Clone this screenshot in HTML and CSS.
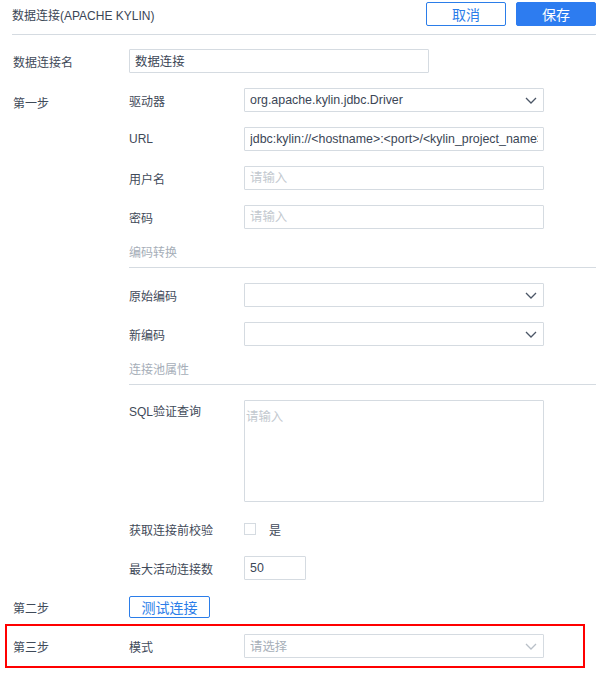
FILE: index.html
```html
<!DOCTYPE html>
<html lang="zh-CN">
<head>
    <meta charset="UTF-8">
    <meta name="viewport" content="width=device-width, initial-scale=1.0">
    <title>数据连接</title>
    <link rel="stylesheet" href="styles.css">
</head>
<body>
    <div class="page">
        <div class="page-header">
            <span class="page-title">数据连接(APACHE KYLIN)</span>
            <div class="header-actions">
                <button class="btn btn-outline">取消</button>
                <button class="btn btn-primary">保存</button>
            </div>
        </div>

        <div class="form-row first">
            <div class="step">数据连接名</div>
            <input class="field field-wide" type="text" value="数据连接">
        </div>

        <!-- step one -->
        <div class="step-group">
            <div class="step">第一步</div>
            <div class="step-body">
                <div class="form-row">
                    <div class="label">驱动器</div>
                    <div class="field select">
                        <span>org.apache.kylin.jdbc.Driver</span>
                        <svg class="chevron" width="12" height="7" viewBox="0 0 12 7"><path d="M1 1l5 5 5-5" fill="none" stroke="#4b5666" stroke-width="1.3"/></svg>
                    </div>
                </div>
                <div class="form-row">
                    <div class="label">URL</div>
                    <input class="field" type="text" value="jdbc:kylin://<hostname>:<port>/<kylin_project_name>">
                </div>
                <div class="form-row">
                    <div class="label">用户名</div>
                    <input class="field" type="text" placeholder="请输入">
                </div>
                <div class="form-row">
                    <div class="label">密码</div>
                    <input class="field" type="text" placeholder="请输入">
                </div>

                <div class="section-title">编码转换</div>
                <div class="form-row">
                    <div class="label">原始编码</div>
                    <div class="field select">
                        <span></span>
                        <svg class="chevron" width="12" height="7" viewBox="0 0 12 7"><path d="M1 1l5 5 5-5" fill="none" stroke="#4b5666" stroke-width="1.3"/></svg>
                    </div>
                </div>
                <div class="form-row">
                    <div class="label">新编码</div>
                    <div class="field select">
                        <span></span>
                        <svg class="chevron" width="12" height="7" viewBox="0 0 12 7"><path d="M1 1l5 5 5-5" fill="none" stroke="#4b5666" stroke-width="1.3"/></svg>
                    </div>
                </div>

                <div class="section-title">连接池属性</div>
                <div class="form-row top">
                    <div class="label">SQL验证查询</div>
                    <textarea class="field area" placeholder="请输入"></textarea>
                </div>
                <div class="form-row">
                    <div class="label">获取连接前校验</div>
                    <label class="check"><span class="box"></span>是</label>
                </div>
                <div class="form-row">
                    <div class="label">最大活动连接数</div>
                    <input class="field field-small" type="text" value="50">
                </div>
            </div>
        </div>

        <div class="form-row step-two">
            <div class="step">第二步</div>
            <button class="btn btn-outline btn-test">测试连接</button>
        </div>

        <div class="form-row step-three">
            <div class="step">第三步</div>
            <div class="label">模式</div>
            <div class="field select muted">
                <span>请选择</span>
                <svg class="chevron" width="12" height="7" viewBox="0 0 12 7"><path d="M1 1l5 5 5-5" fill="none" stroke="#b9c0c8" stroke-width="1.3"/></svg>
            </div>
        </div>
    </div>
</body>
</html>
```

FILE: styles.css
```css
/* Base styles */
body {
    margin: 0;
    font-family: 'Liberation Sans', 'Noto Sans CJK SC', sans-serif;
    font-size: 12px;
    color: #3f4a59;
    background: #fff;
}

.page {
    padding: 0 11px 0 0;
}

.page-header {
    display: flex;
    justify-content: space-between;
    align-items: flex-start;
    height: 34px;
    margin-left: 12px;
    border-bottom: 1px solid #d5dbe1;
}

.page-title {
    line-height: 16px;
    margin-top: 8px;
    font-size: 12px;
    color: #3b4656;
}

.header-actions {
    display: flex;
    gap: 10px;
    margin-top: 2px;
}

.btn {
    font-family: 'Liberation Sans', 'Noto Sans CJK SC', sans-serif;
    font-size: 14px;
    height: 24px;
    width: 80px;
    padding: 0;
    border-radius: 2px;
    cursor: pointer;
}

.btn-outline {
    background: #fff;
    color: #2b7de9;
    border: 1px solid #2b7de9;
}

.btn-primary {
    background: #2d7cf0;
    color: #fff;
    border: 1px solid #2d7cf0;
}

.form-row {
    display: flex;
    align-items: center;
    margin-top: 15px;
}

.form-row.first {
    margin-top: 14px;
}

.form-row.top {
    align-items: flex-start;
}

.step {
    width: 116px;
    padding-left: 13px;
    flex-shrink: 0;
}

.label {
    width: 115px;
    flex-shrink: 0;
}

.form-row.top .label {
    padding-top: 2px;
}

.step-group {
    display: flex;
    align-items: flex-start;
}

.step-group > .step {
    margin-top: 21px;
}

.step-body {
    flex: 1;
}

.field {
    box-sizing: border-box;
    width: 300px;
    height: 24px;
    border: 1px solid #d5dbe1;
    border-radius: 1px;
    padding: 0 5px;
    font-family: 'Liberation Sans', 'Noto Sans CJK SC', sans-serif;
    font-size: 12.4px;
    color: #3b4656;
    background: #fff;
    outline: none;
}

.field::placeholder {
    color: #c3c9cf;
}

.field-small {
    width: 62px;
}

.select {
    display: flex;
    align-items: center;
    justify-content: space-between;
    padding-right: 6px;
}

.select.muted {
    color: #a8b0b9;
}

.area {
    height: 102px;
    padding: 6px 1px;
    resize: none;
}

.section-title {
    margin-top: 15px;
    line-height: 18px;
    padding-bottom: 5px;
    color: #a6aeb8;
    border-bottom: 1px solid #d5dbe1;
}

.check {
    display: flex;
    align-items: center;
    height: 24px;
}

.box {
    width: 12px;
    height: 12px;
    box-sizing: border-box;
    border: 1px solid #d5dbe1;
    margin-right: 13px;
}

.step-two {
    margin-top: 16px;
}

.btn-test {
    width: 81px;
    height: 22px;
}

.step-three {
    margin: 6px 11px 0 5px;
    padding: 8px 0;
    border: 2px solid #f00;
}

.step-three .step {
    width: 116px;
    padding-left: 6px;
}
```
